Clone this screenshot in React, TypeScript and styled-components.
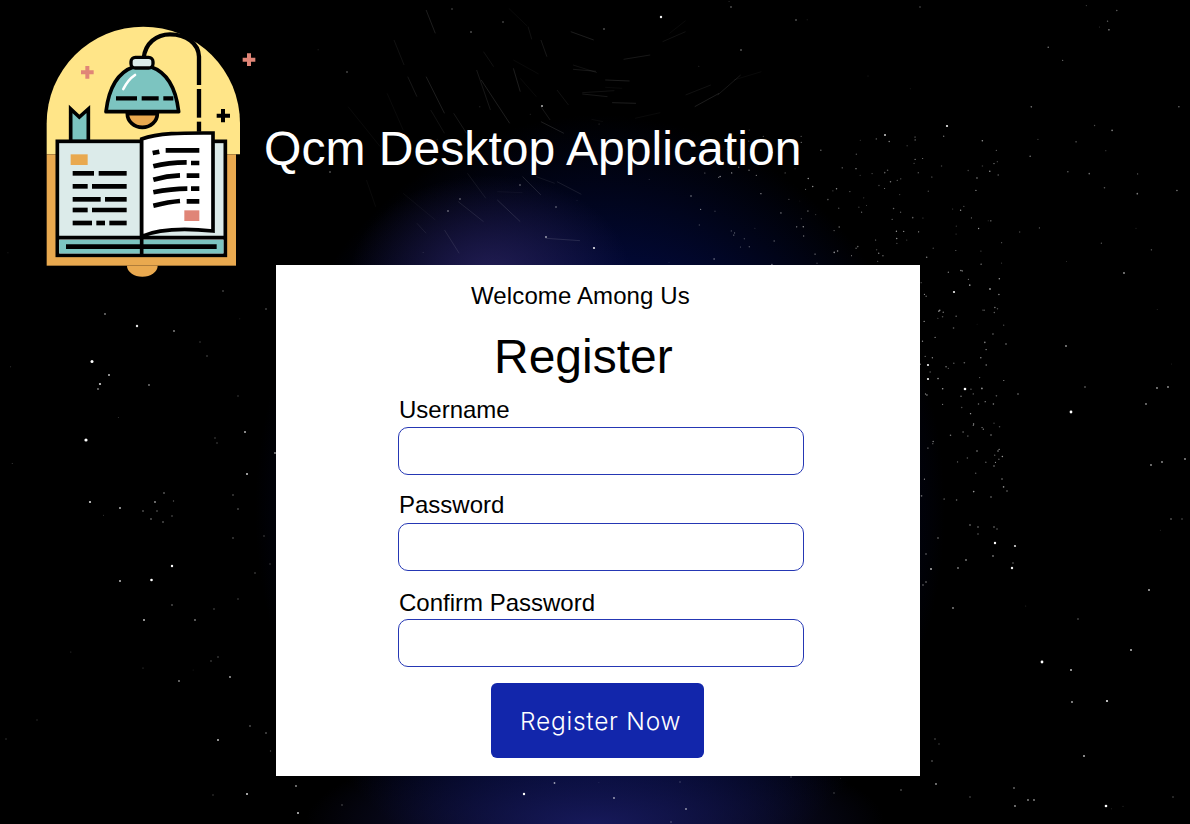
import React from "react";
import styled, { createGlobalStyle } from "styled-components";

const Global = createGlobalStyle`
  html, body { margin: 0; padding: 0; background: #000; }
  * { box-sizing: border-box; }
`;

const Page = styled.div`
  position: relative;
  width: 100%;
  height: 100vh;
  overflow: hidden;
  font-family: "Liberation Sans", Arial, sans-serif;
  background:
    radial-gradient(ellipse 140px 100px at 490px 275px, rgba(44, 36, 96, 0.75), rgba(30, 25, 80, 0) 100%),
    radial-gradient(ellipse 290px 85px at 595px 824px, rgba(28, 30, 105, 0.8), rgba(20, 20, 80, 0) 100%),
    radial-gradient(ellipse 345px 395px at 600px 510px, rgba(2, 10, 62, 1) 0%, rgba(2, 9, 55, 0.95) 62%, rgba(0, 0, 10, 0) 100%),
    #000;
`;

const Sky = styled.svg`
  position: absolute;
  inset: 0;
`;

const Header = styled.header`
  position: relative;
  display: flex;
  align-items: flex-start;
  height: 265px;
  padding: 25px 0 0 44px;
`;

const LogoMark = styled.svg`
  flex: none;
  width: 202px;
  height: 255px;
  overflow: visible;
`;

const AppTitle = styled.h1`
  margin: 93px 0 0 18px;
  color: #fff;
  font-size: 48px;
  line-height: 62px;
  font-weight: 400;
  letter-spacing: 0.05px;
  white-space: nowrap;
`;

const Card = styled.main`
  position: relative;
  width: 644px;
  height: 511px;
  margin-left: 276px;
  padding-top: 17px;
  background: #fff;
  color: #000;
`;

const Welcome = styled.p`
  margin: 0 0 0 195px;
  font-size: 24px;
  line-height: 28px;
  letter-spacing: 0.12px;
`;

const CardTitle = styled.h2`
  margin: 19px 0 0 218px;
  font-size: 48px;
  line-height: 55px;
  font-weight: 400;
`;

const Form = styled.form`
  display: flex;
  flex-direction: column;
  align-items: flex-start;
  width: 406px;
  margin: 10px 0 0 122px;
`;

const Field = styled.label<{ $gap: number }>`
  display: block;
  width: 100%;
  margin-bottom: ${(p) => p.$gap}px;
`;

const FieldLabel = styled.span<{ $line: number }>`
  display: block;
  padding-left: 1px;
  font-size: 24px;
  line-height: ${(p) => p.$line}px;
  height: 33px;
`;

const Input = styled.input`
  display: block;
  width: 100%;
  height: 48px;
  padding: 0 12px;
  background: #fff;
  border: 1px solid #2537b4;
  border-radius: 10px;
  outline: none;
`;

const Submit = styled.button`
  width: 213px;
  height: 75px;
  margin: 0 0 0 93px;
  padding: 0 0 0 29px;
  text-align: left;
  background: #1226ab;
  border: 0;
  border-radius: 6px;
  color: #fff;
  font-family: "Inter", "Open Sans", sans-serif;
  font-size: 24.5px;
  font-weight: 300;
  letter-spacing: 0.75px;
  white-space: nowrap;
`;

/* Stars placed from the picture: x, y, radius, opacity */
const upperLeftStars: number[][] = [
  [92,361.5,1.5,1],[86,440,1.6,1],[137,326,1.2,.9],[90,502,1.1,.85],[120,508,1,.7],[100,384,1.1,.85],[109,375,1,.75],[98,389,.9,.5],[149,385,.9,.5],[174,331,.9,.55],[105,314,.9,.5],[245,432,1,.7],[247,474,1,.8],[275,453,.9,.6],[164,493,.8,.55],[155,502,.9,.6],[143,511,.8,.5],[157,511,.7,.5],[151,519,.8,.55],[163,522,.8,.5],[172,516,.7,.45],[173.5,501,.7,.35],[233,495,.8,.4],[238,509,.8,.45],[233,538,.8,.4],[264,536,.7,.35],[215,438,.7,.35],[217,443,.7,.35],[207,356,.7,.4],[200,342,.7,.3],[266,309,.7,.5],[223,291,.8,.4],[238,396,.7,.3],
];
const lowerLeftStars: number[][] = [
  [172,566,1.2,1],[151.5,580,1.3,1],[120,581,1,.75],[172,605,.8,.5],[144,620,1,.75],[195,620,.9,.5],[214,609,.7,.4],[238,599,.7,.35],[255,573,.7,.4],[270,564,.7,.3],[218,657,.7,.4],[211,661,.7,.4],[230,677,.9,.7],[179,681,.9,.55],[143,668,.6,.3],[250,726,.8,.5],[266,733,.8,.5],[218,740,1,.75],[270.5,751,.7,.3],[247,794,1,.85],[213,795,.7,.3],[37,720,.7,.2],[6,739,.7,.25],
];
const rightStars: number[][] = [
  [995,543,1.2,1],[1015,546,1.1,.85],[993,556,.9,.45],[1012,568,1.2,.95],[1013,563,.8,.4],[966,560,.9,.5],[958,568,.9,.5],[931,569,1,.7],[926,554,.8,.45],[926,582,.8,.5],[923,585,.8,.45],[953,608,.9,.55],[1149,590,1,.7],[1078,619,.8,.4],[1131,650,1,.75],[1042,662,1.4,1],[1071,670,1,.75],[1072,702,.9,.7],[1107,701,1.1,.9],[1084,756,1,.7],[935,739,.7,.4],[939,744,.7,.3],[932,761,.8,.45],[936,784,.9,.6],[1014,788,.8,.65],[970,797,.8,.35],[1028,800,.9,.55],[1034,800,.9,.55],[1015,806,.9,.6],[1106,806,1.3,1],[1173,797,.7,.4],
  [954,292,1.1,.95],[928,365,1.1,.95],[928,379,1.1,.95],[965,389,1.3,1],[1071,412,1.4,1],[1124,273,.9,.6],[990,289,.9,.6],[1066,346,.9,.6],[1006,344,.8,.5],[1085,387,.8,.5],[1157,388,.9,.6],[1168,387,.9,.6],[1146,404,.9,.55],[1151,465,.9,.6],[1162,462,.9,.6],[1185,459,.9,.6],[1171,519,.8,.5],[1182,519,.7,.4],[1018,394,.8,.5],[991,435,.8,.5],[998,451,.8,.55],[977,451,.8,.55],[994,466,.8,.5],[1002,479,.8,.5],[1007,491,.8,.45],[991,497,.8,.5],[970,525,.8,.55],[978,527,.8,.5],[994,527,.8,.5],[997,529,.7,.45],[978,534,.7,.45],[938,538,.8,.5],
];
const topStars: number[][] = [
  [661,17,1.2,.95],[947,126,1.1,.95],[885,135,1,.8],[542,106,1,.7],[594,248,1.1,.9],[741,50,.8,.55],[796,20,.8,.5],[731,7,.8,.5],[920,7,.7,.4],[471,32,.8,.5],[452,9,.7,.4],[503,22,.7,.5],[604,29,.8,.5],[347,72,.8,.45],[330,172,.8,.5],[520,185,.8,.5],[460,199,.8,.55],[448,211,.8,.6],[556,207,.8,.5],[546,237,.9,.65],[691,196,.8,.5],
];
const bottomStars: number[][] = [
  [296,786,.9,.6],[298,813,1,.8],[554.5,783,.9,.6],[524,794,1.2,1],[614,798,.9,.65],[686,809,.9,.6],[342,805,.7,.4],[901,790,.8,.45],[671,822,.7,.4],[680,782,.7,.3],[834,793,.7,.35],[791,777,.7,.4],
];

function mulberry(seed: number) {
  return () => {
    seed |= 0;
    seed = (seed + 0x6d2b79f5) | 0;
    let t = Math.imul(seed ^ (seed >>> 15), 1 | seed);
    t = (t + Math.imul(t ^ (t >>> 7), 61 | t)) ^ t;
    return ((t ^ (t >>> 14)) >>> 0) / 4294967296;
  };
}

function buildStars(): number[][] {
  const r = mulberry(4217);
  const out: number[][] = [];
  // the loose band above and to the right of the card
  for (let i = 0; i < 130; i++) {
    out.push([695 + r() * 310, 135 + r() * 130, 0.5 + r() * 0.3, 0.2 + r() * 0.45]);
  }
  // the denser cluster beside the card
  for (let i = 0; i < 85; i++) {
    out.push([920 + r() * 85, 255 + r() * 245, 0.6 + r() * 0.25, 0.3 + r() * 0.35]);
  }
  // faint stars, everywhere
  for (let i = 0; i < 60; i++) {
    out.push([r() * 1190, r() * 824, 0.5, 0.1 + r() * 0.18]);
  }
  for (let i = 0; i < 24; i++) {
    out.push([1000 + r() * 190, r() * 265, 0.6 + r() * 0.25, 0.2 + r() * 0.35]);
  }
  return out;
}

const streaks: number[][] = [
  [520,25,560,78],[562,80,570,118],[590,120,603,170],[655,95,705,120],[905,62,870,100],[905,95,855,125],[828,165,770,178],[340,30,360,100],[530,180,585,222],[660,195,712,218],[660,208,710,214],[730,240,783,243],[730,262,767,265],[680,278,750,272],[680,282,735,290],[745,308,797,310],[850,338,795,355],[960,255,905,285],[1025,225,975,285],[978,280,925,320],[1070,215,1010,240],[465,155,487,200],[450,210,480,330],[530,205,545,275],[545,235,580,290],[625,270,650,315],[590,320,610,360],[590,365,640,400],[700,358,725,365],[270,120,292,195],[300,230,320,290],[340,230,380,340],[255,280,290,390],[350,330,380,400],[400,340,428,400],[460,240,522,370],[170,320,240,440],[580,530,620,550],[625,545,678,583],[550,530,590,585],[495,575,550,578],[430,520,470,595],[410,605,465,665],[495,600,545,665],[290,580,360,660],[320,670,340,700],[380,690,412,760],[600,715,675,722],[210,540,230,620],
];

const stars = [...upperLeftStars, ...lowerLeftStars, ...rightStars, ...topStars, ...bottomStars, ...buildStars()];

const StarField = () => (
  <Sky width="1190" height="824" viewBox="0 0 1190 824" aria-hidden="true">
    <g transform="translate(270 0) scale(0.4592 0.3333)">
      {streaks.map(([x1, y1, x2, y2], i) => (
        <line key={i} x1={x1} y1={y1} x2={x2} y2={y2} stroke="#fff" strokeOpacity={0.06 + (i % 4) * 0.035} strokeWidth="1.8" />
      ))}
    </g>
    {stars.map(([x, y, rad, o], i) => (
      <circle key={i} cx={x} cy={y} r={rad} fill="#fff" opacity={o} />
    ))}
  </Sky>
);

const leftBars: number[][] = [
  [128,192,475],[206,290,475],[128,173,514],[186,290,514],[128,212,553],[225,290,553],[128,173,585],[186,290,585],[128,186,624],[199,225,624],[238,290,624],
];

const Logo = () => (
  <LogoMark viewBox="42 30 606 765" aria-hidden="true">
    <path d="M50 418V325A290 290 0 0 1 630 325V418Z" fill="#ffe588" />
    <rect x="50" y="418" width="568" height="334" fill="#e9a94f" />
    <path d="M291 752A46 33 0 0 0 383 752Z" fill="#e9a94f" />
    <path d="M341 130C345 85 380 58 420 58C470 58 505 85 507 125V350" fill="none" stroke="#000" strokeWidth="13" />
    <rect x="498" y="210" width="20" height="12" fill="#ffe588" />
    <rect x="498" y="308" width="20" height="12" fill="#ffe588" />
    <path d="M122 380V282L148 306L175 282V380Z" fill="#7cc4c0" stroke="#000" strokeWidth="11" />
    <path d="M228 290C236 220 262 172 312 155H362C412 172 438 220 446 290Z" fill="#7cc4c0" stroke="#000" strokeWidth="11" strokeLinejoin="round" />
    <path d="M258 250H321M335 250H386M400 250H430" stroke="#000" strokeWidth="13" />
    <rect x="303" y="127" width="66" height="32" rx="13" fill="#dcebea" stroke="#000" strokeWidth="10" />
    <path d="M280 222C290 202 300 190 315 180" fill="none" stroke="#fff" strokeWidth="8" strokeLinecap="round" />
    <path d="M292 296A45 41 0 0 0 382 296Z" fill="#e9a94f" stroke="#000" strokeWidth="11" />
    <path d="M172 153V191M153 172H191M657 115V153M638 134H676" stroke="#e08577" strokeWidth="12" />
    <path d="M579 282V322M560 302H600" stroke="#000" strokeWidth="12" />
    <rect x="82" y="379" width="504" height="342" fill="#dcebea" stroke="#000" strokeWidth="11" />
    <rect x="88" y="675" width="492" height="40" fill="#7cc4c0" />
    <path d="M82 668H586" stroke="#000" strokeWidth="11" />
    <path d="M108 695H560" stroke="#000" strokeWidth="14" />
    <path d="M335 375V722" stroke="#000" strokeWidth="11" />
    <path d="M335 372C390 352 470 354 549 354V648C470 640 390 640 335 664Z" fill="#fff" stroke="#000" strokeWidth="11" />
    <rect x="122" y="418" width="51" height="32" fill="#e9a94f" />
    {leftBars.map(([a, b, y], i) => (
      <path key={i} d={`M${a} ${y}H${b}`} stroke="#000" strokeWidth="14" />
    ))}
    <g fill="none" stroke="#000" strokeWidth="14">
      <path d="M368 414L388 410M407 406H508" />
      <path d="M370 454C400 446 435 442 470 442M483 444H508" />
      <path d="M370 494C395 487 425 482 450 481M470 482H508" />
      <path d="M370 532C400 526 435 521 472 521M483 521H508" />
      <path d="M370 572C395 566 425 560 450 558M470 559H508" />
    </g>
    <rect x="463" y="586" width="45" height="32" fill="#e08577" />
  </LogoMark>
);

export default function App() {
  return (
    <Page>
      <Global />
      <StarField />
      <Header>
        <Logo />
        <AppTitle>Qcm Desktop Application</AppTitle>
      </Header>
      <Card>
        <Welcome>Welcome Among Us</Welcome>
        <CardTitle>Register</CardTitle>
        <Form onSubmit={(e) => e.preventDefault()}>
          <Field $gap={15}>
            <FieldLabel $line={32}>Username</FieldLabel>
            <Input type="text" />
          </Field>
          <Field $gap={15}>
            <FieldLabel $line={30}>Password</FieldLabel>
            <Input type="password" />
          </Field>
          <Field $gap={16}>
            <FieldLabel $line={34}>Confirm Password</FieldLabel>
            <Input type="password" />
          </Field>
          <Submit type="submit">Register Now</Submit>
        </Form>
      </Card>
    </Page>
  );
}
